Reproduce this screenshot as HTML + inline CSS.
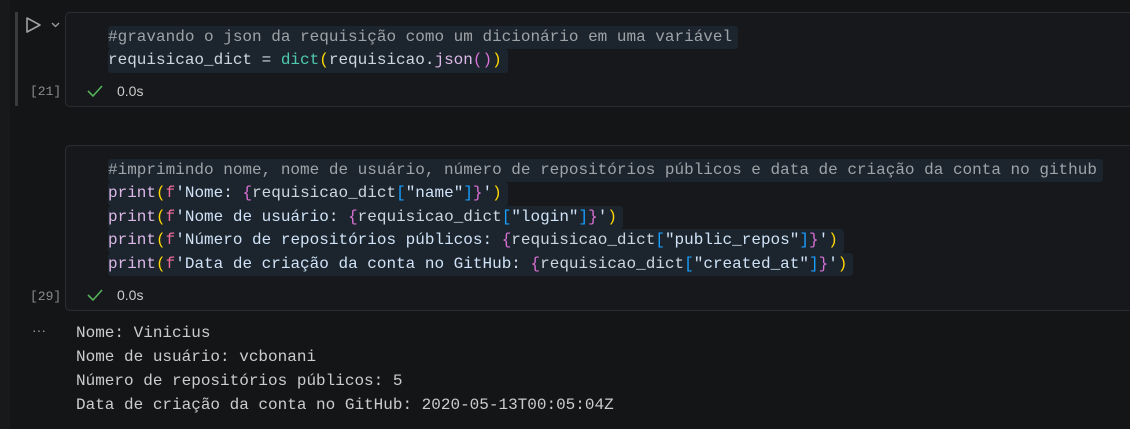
<!DOCTYPE html>
<html><head><meta charset="utf-8"><style>
body{margin:0;width:1130px;height:429px;background:#141517;position:relative;overflow:hidden;font-family:"Liberation Mono",monospace;}
.strip{position:absolute;left:0;top:0;width:10px;height:429px;background:#18191b;}
.bar{position:absolute;left:15px;width:3px;background:#3a3b3e;}
.cell{position:absolute;left:65px;width:1075px;background:#17181b;border:1px solid #2c2d31;border-radius:5px;}
.code{position:absolute;left:108px;font-size:16px;line-height:23.4px;white-space:pre;color:#cdd6df;}
.ln{display:inline-block;background:#1c252d;padding-right:6px;border-radius:3px;}
.cm{color:#9ea3a8}.tl{color:#4ec9b0}.y{color:#ffd700}.p{color:#da70d6}.b{color:#179fff}
.fn{color:#dcb8e8}.f{color:#f06b9a}.s{color:#cfe2f7}
.num{position:absolute;left:30px;font-size:13px;color:#8b8b8b;}
.chk{position:absolute;left:86px;}
.t{position:absolute;left:117px;font-family:"Liberation Sans",sans-serif;font-size:14px;color:#cccccc;}
.out{position:absolute;left:76px;top:321px;font-size:16px;line-height:24px;white-space:pre;color:#cccccc;}
</style></head><body>
<div class="strip"></div>
<div class="bar" style="top:12px;height:94px"></div>
<svg style="position:absolute;left:25px;top:16px" width="40" height="18"><path d="M2 2 L15 9 L2 16 Z" fill="none" stroke="#a0a0a0" stroke-width="1.6" stroke-linejoin="round"/><path d="M27 7 L30.5 10.5 L34 7" fill="none" stroke="#a0a0a0" stroke-width="1.3"/></svg>
<div class="cell" style="top:12px;height:93px"></div>
<div class="code" style="top:26px"><span class="ln cm">#gravando o json da requisição como um dicionário em uma variável</span>
<span class="ln">requisicao_dict = <span class="tl">dict</span><span class="y">(</span>requisicao.<span class="fn">json</span><span class="p">()</span><span class="y">)</span></span></div>
<div class="num" style="top:84px">[21]</div>
<svg class="chk" style="top:84px" width="18" height="14"><path d="M2 7 L7 12 L16 2" fill="none" stroke="#56b35c" stroke-width="1.6"/></svg>
<div class="t" style="top:83px">0.0s</div>

<div class="cell" style="top:145px;height:164px"></div>
<div class="code" style="top:159px"><span class="ln cm">#imprimindo nome, nome de usuário, número de repositórios públicos e data de criação da conta no github</span>
<span class="ln"><span class="fn">print</span><span class="y">(</span><span class="f">f</span><span class="s">'Nome: </span><span class="p">{</span>requisicao_dict<span class="b">[</span><span class="s">"name"</span><span class="b">]</span><span class="p">}</span><span class="s">'</span><span class="y">)</span></span>
<span class="ln"><span class="fn">print</span><span class="y">(</span><span class="f">f</span><span class="s">'Nome de usuário: </span><span class="p">{</span>requisicao_dict<span class="b">[</span><span class="s">"login"</span><span class="b">]</span><span class="p">}</span><span class="s">'</span><span class="y">)</span></span>
<span class="ln"><span class="fn">print</span><span class="y">(</span><span class="f">f</span><span class="s">'Número de repositórios públicos: </span><span class="p">{</span>requisicao_dict<span class="b">[</span><span class="s">"public_repos"</span><span class="b">]</span><span class="p">}</span><span class="s">'</span><span class="y">)</span></span>
<span class="ln"><span class="fn">print</span><span class="y">(</span><span class="f">f</span><span class="s">'Data de criação da conta no GitHub: </span><span class="p">{</span>requisicao_dict<span class="b">[</span><span class="s">"created_at"</span><span class="b">]</span><span class="p">}</span><span class="s">'</span><span class="y">)</span></span></div>
<div class="num" style="top:289px">[29]</div>
<svg class="chk" style="top:288px" width="18" height="14"><path d="M2 7 L7 12 L16 2" fill="none" stroke="#56b35c" stroke-width="1.6"/></svg>
<div class="t" style="top:287px">0.0s</div>

<div style="position:absolute;left:32px;top:322px;color:#9a9a9a;font-size:14px;font-family:'Liberation Sans',sans-serif">···</div>
<div class="out">Nome: Vinicius
Nome de usuário: vcbonani
Número de repositórios públicos: 5
Data de criação da conta no GitHub: 2020-05-13T00:05:04Z</div>
</body></html>
